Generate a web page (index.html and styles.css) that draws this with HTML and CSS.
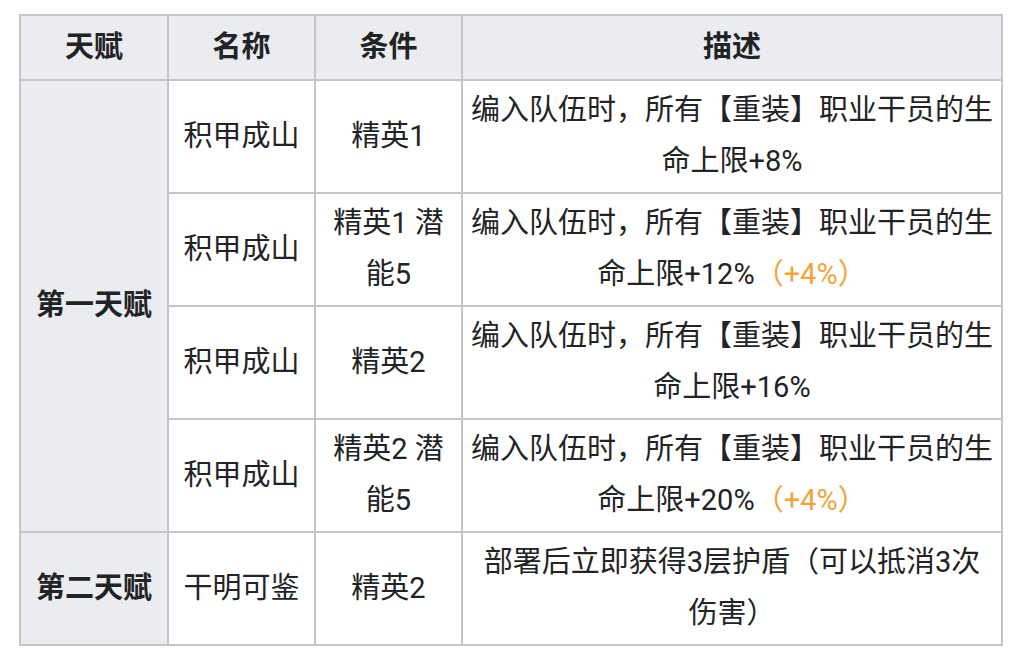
FILE: index.html
```html
<!DOCTYPE html>
<html lang="zh-CN">
<head>
<meta charset="utf-8">
<title>天赋</title>
<link rel="stylesheet" href="styles.css">
</head>
<body>
<table class="talents">
  <colgroup>
    <col class="c-talent">
    <col class="c-name">
    <col class="c-cond">
    <col class="c-desc">
  </colgroup>
  <thead>
    <tr><th>天赋</th><th>名称</th><th>条件</th><th>描述</th></tr>
  </thead>
  <tbody>
    <tr>
      <th rowspan="4">第一天赋</th>
      <td>积甲成山</td>
      <td>精英1</td>
      <td>编入队伍时，所有【重装】职业干员的生命上限+8%</td>
    </tr>
    <tr>
      <td>积甲成山</td>
      <td>精英1 潜能5</td>
      <td>编入队伍时，所有【重装】职业干员的生命上限+12%<span class="bonus">（+4%）</span></td>
    </tr>
    <tr>
      <td>积甲成山</td>
      <td>精英2</td>
      <td>编入队伍时，所有【重装】职业干员的生命上限+16%</td>
    </tr>
    <tr>
      <td>积甲成山</td>
      <td>精英2 潜能5</td>
      <td>编入队伍时，所有【重装】职业干员的生命上限+20%<span class="bonus">（+4%）</span></td>
    </tr>
    <tr>
      <th>第二天赋</th>
      <td>干明可鉴</td>
      <td>精英2</td>
      <td>部署后立即获得3层护盾（可以抵消3次伤害）</td>
    </tr>
  </tbody>
</table>
</body>
</html>
```

FILE: styles.css
```css
html, body {
  margin: 0;
  padding: 0;
  background: #ffffff;
}

body {
  font-family: Roboto, "Noto Sans CJK SC", sans-serif;
  color: #222324;
  font-size: 29px;
  line-height: 51px;
}

.talents {
  border-collapse: collapse;
  table-layout: fixed;
  width: 982px;
  margin: 14px 0 0 19px;
}

.c-talent { width: 148px; }
.c-name { width: 147px; }
.c-cond { width: 147px; }
.c-desc { width: 540px; }

.talents th,
.talents td {
  border: 2px solid #c3c5c9;
  text-align: center;
  vertical-align: middle;
  padding: 4px 7px 5px;
}

.talents thead th {
  padding: 6px 7px;
}

.talents th {
  background: #eaecf0;
  font-weight: 700;
}

.talents td {
  background: #ffffff;
  font-weight: 400;
}

.bonus {
  color: #f0a43a;
}
```
